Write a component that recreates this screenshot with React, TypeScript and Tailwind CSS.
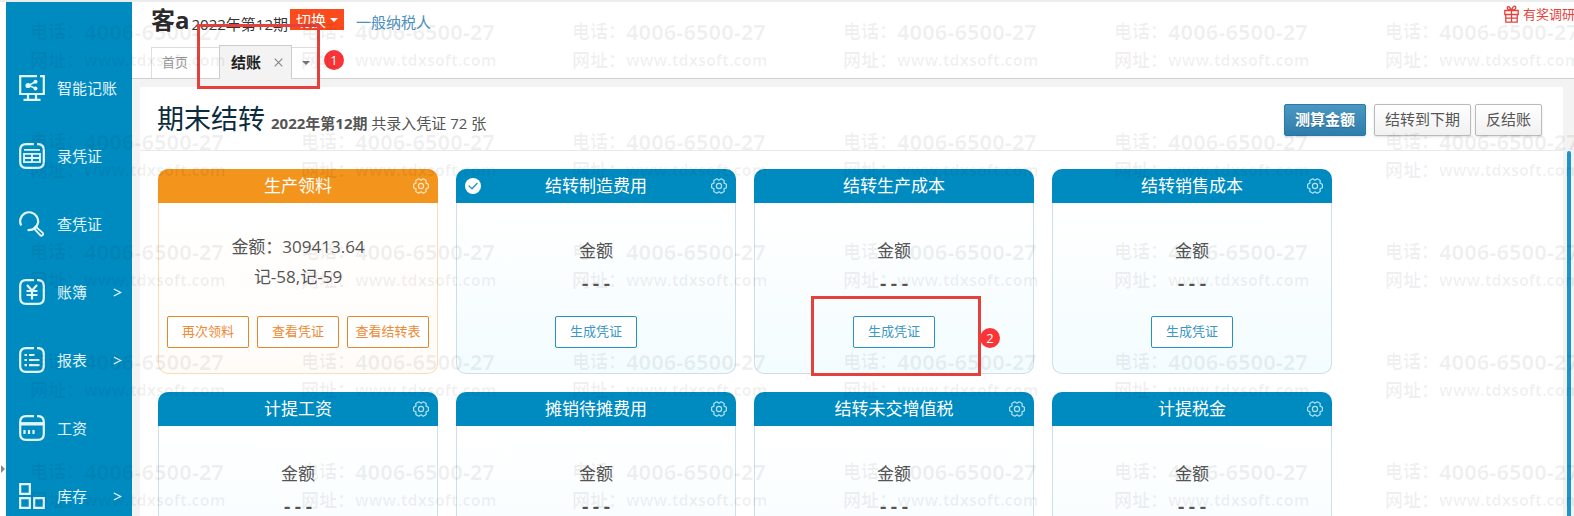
import type { ReactNode } from 'react';

type Card = {
  title: string;
  lines?: string[];
  actions: string[];
  done?: boolean;
  settings?: boolean;
  warm?: boolean;
  marked?: boolean;
};

const cards: Card[] = [
  {
    title: '生产领料',
    lines: ['金额：309413.64', '记-58,记-59'],
    actions: ['再次领料', '查看凭证', '查看结转表'],
    settings: true,
    warm: true,
  },
  { title: '结转制造费用', actions: ['生成凭证'], done: true, settings: true },
  { title: '结转生产成本', actions: ['生成凭证'], marked: true },
  { title: '结转销售成本', actions: ['生成凭证'], settings: true },
  { title: '计提工资', actions: ['生成凭证'], settings: true },
  { title: '摊销待摊费用', actions: ['生成凭证'], settings: true },
  { title: '结转未交增值税', actions: ['生成凭证'], settings: true },
  { title: '计提税金', actions: ['生成凭证'], settings: true },
];

function Icon({ children }: { children: ReactNode }) {
  return (
    <svg
      viewBox="0 0 26 26"
      className="size-[26px] shrink-0"
      fill="none"
      stroke="currentColor"
      strokeWidth="2.2"
      aria-hidden="true"
    >
      {children}
    </svg>
  );
}

// rounded frame with a small break in the top edge
const frame = 'M15 1.2H7Q1.2 1.2 1.2 7V19Q1.2 24.8 7 24.8H19Q24.8 24.8 24.8 19V7Q24.8 1.6 19.5 1.2H18';

const menu = [
  {
    label: '智能记账',
    icon: (
      <Icon>
        <path d="M18 1.2H1.2V19H24.8V1.2H21" />
        <path d="M9 19v5M17 19v5M4.5 24.8h17" />
        <path d="M17 6.5L9.5 10.5L17 13.5" strokeWidth="1.5" />
        <circle cx="16.5" cy="6.8" r="2" fill="currentColor" stroke="none" />
        <circle cx="9" cy="10.5" r="2.6" fill="currentColor" stroke="none" />
        <circle cx="16.5" cy="13.5" r="2" fill="currentColor" stroke="none" />
      </Icon>
    ),
  },
  {
    label: '录凭证',
    icon: (
      <Icon>
        <path d={frame} />
        <path d="M5 6.8h16M5 10.8h16v8.4H5zM5 15h16M13 10.8v8.4" strokeWidth="1.8" />
      </Icon>
    ),
  },
  {
    label: '查凭证',
    icon: (
      <Icon>
        <path d="M2.2 14.5A9 9 0 1 1 15.5 17.5Q13 19.3 8.5 19" />
        <path d="M16.5 15.5l7 6.2q1.4 1.5 0 2.6t-2.6-.4l-6-6.5z" strokeWidth="1.8" />
      </Icon>
    ),
  },
  {
    label: '账簿',
    more: true,
    icon: (
      <Icon>
        <path d={frame} />
        <path d="M8 6l5 5.5L18 6M7.5 12h11M7.5 16h11M13 11.5v9" />
      </Icon>
    ),
  },
  {
    label: '报表',
    more: true,
    icon: (
      <Icon>
        <path d={frame} />
        <path d="M5.5 8h2.5M10 8h5.5M5.5 13h2.5M10 13h10.5M5.5 18.2h2.5M10 18.2h10.5" />
      </Icon>
    ),
  },
  {
    label: '工资',
    icon: (
      <Icon>
        <path d={frame} />
        <path d="M1 8.8h24" strokeWidth="3.4" />
        <path d="M5.5 15v4M10 15v4M14.5 15v4" />
      </Icon>
    ),
  },
  {
    label: '库存',
    more: true,
    icon: (
      <Icon>
        <path d="M1.2 1.2h9.6v9.6H1.2zM1.2 15.2h9.6v9.6H1.2zM15.2 15.2h9.6v9.6h-9.6z" />
      </Icon>
    ),
  },
];

function Gear() {
  return (
    <svg viewBox="0 0 16 16" className="size-4" fill="none" stroke="currentColor" strokeWidth="1.2" aria-hidden="true">
      <path
        d="M15.4 6.3V9.7L13 10.9L13.2 13.5L10.2 15.2L8 13.8L5.8 15.2L2.8 13.5L3 10.9L.6 9.7V6.3L3 5.1L2.8 2.5L5.8 .8L8 2.2L10.2 .8L13.2 2.5L13 5.1Z"
        strokeLinejoin="round"
      />
      <circle cx="8" cy="8" r="2.6" />
    </svg>
  );
}

function Gift() {
  return (
    <svg viewBox="0 0 15 18" className="h-[18px] w-[15px]" fill="none" stroke="currentColor" strokeWidth="1.3" aria-hidden="true">
      <path d="M.8 5.5h13.4v4H.8zM1.8 9.5h11.4v7.7H1.8zM7.5 5.5v11.7M1.8 13.2h11.4" />
      <path d="M7.5 5.3Q2.6 5 3.4 2.2Q4.6 0 7.5 5.3Q9.4-.4 11.6 1.6Q12.6 5 7.5 5.3" />
    </svg>
  );
}

function Caret() {
  return <span className="border-x-4 border-t-4 border-x-transparent" />;
}

function Badge({ n }: { n: number }) {
  return (
    <span className="flex size-5 items-center justify-center rounded-full bg-[#fa3538] text-[13px] leading-5 text-white">
      {n}
    </span>
  );
}

function Sidebar() {
  return (
    <aside className="w-[126px] shrink-0 bg-[#008bc0] pt-[52px] text-[#e4f6fd]">
      <nav>
        {menu.map((item) => (
          <a key={item.label} href="#" className="flex h-[68px] items-center pr-[10px] pl-[13px] text-[15px]">
            {item.icon}
            <span className="ml-3 grow">{item.label}</span>
            {item.more && (
              <svg viewBox="0 0 9 9" className="size-[9px]" fill="none" stroke="currentColor" strokeWidth="1.4" aria-hidden="true">
                <path d="M.8 1L7.6 4.5L.8 8" />
              </svg>
            )}
          </a>
        ))}
      </nav>
    </aside>
  );
}

function TopBar() {
  return (
    <header className="flex h-[77px] shrink-0 flex-col justify-between border-b border-[#cfcfcf] bg-white">
      <div className="flex items-start justify-between">
        <div className="flex items-start pl-[19px]">
          <h1 className="text-2xl leading-9 font-bold text-[#2b2b2b]">客a</h1>
          <span className="mt-2.5 ml-0.5 text-[15px] leading-6 text-[#333]">2022年第12期</span>
          <button className="mt-[7px] ml-0.5 flex h-[21px] items-center gap-1 bg-[#fb4a1c] px-1.5 text-[15px] leading-5 text-white">
            切换
            <Caret />
          </button>
          <a href="#" className="mt-2 ml-3 text-[15px] leading-6 text-[#4c8fbd]">
            一般纳税人
          </a>
        </div>
        <a href="#" className="mt-0.5 -mr-px flex items-center gap-1 text-[13px] leading-5 text-[#e8413c]">
          <Gift />
          有奖调研
        </a>
      </div>
      <div className="-mb-px flex items-end pl-[19px]">
        <button className="h-8 w-[68px] border border-r-0 border-[#ddd] border-b-[#cfcfcf] pr-4 pl-2.5 text-left text-[13px] text-[#999]">
          首页
        </button>
        <div className="relative flex h-[34px] w-[73px] items-center justify-between border border-b-0 border-[#ccc] bg-[#f3f3f3] pr-2 pl-[11px]">
          <button className="text-[15px] font-bold text-[#222]">结账</button>
          <button aria-label="关闭" className="text-[#888]">
            <svg viewBox="0 0 9 9" className="size-[9px]" fill="none" stroke="currentColor" strokeWidth="1.2">
              <path d="M.7.7L8.3 8.3M8.3.7L.7 8.3" />
            </svg>
          </button>
          <div className="pointer-events-none absolute -top-[22px] -left-[23px] z-10 h-[65px] w-[123px] border-[3px] border-[#e6403d]" />
          <div className="absolute top-1 left-[104px] z-10">
            <Badge n={1} />
          </div>
        </div>
        <button aria-label="更多" className="flex h-8 w-7 items-center justify-center border-t border-b border-[#ddd] border-b-[#cfcfcf] text-[#777]">
          <Caret />
        </button>
      </div>
    </header>
  );
}

function CarryCard({ card }: { card: Card }) {
  const warm = card.warm;
  return (
    <section
      className={`relative flex h-[205px] w-[280px] flex-col rounded-[10px] border border-t-0 bg-linear-to-b from-white from-20% ${
        warm ? 'border-[#fbdcb6] to-[#fffcf8]' : 'border-[#cbe0ea] to-[#f3fcff]'
      }`}
    >
      <div
        className={`-mx-px flex h-[34px] shrink-0 items-center justify-between rounded-t-[10px] px-[9px] text-white ${
          warm ? 'bg-[#f3941d]' : 'bg-[#008bc0]'
        }`}
      >
        <span className="w-4">
          {card.done && (
            <svg viewBox="0 0 16 16" className="size-4" fill="none" aria-label="已完成">
              <circle cx="8" cy="8" r="8" fill="white" />
              <path d="M3.6 7.6L7 10.8L12.4 5" stroke="#2b8fc0" strokeWidth="1.3" />
            </svg>
          )}
        </span>
        <h3 className="text-[17px] leading-6">{card.title}</h3>
        <span className="w-4">
          {card.settings && (
            <button aria-label="设置" className={`block ${warm ? 'text-[#fde6c4]' : 'text-[#b5e2f3]'}`}>
              <Gear />
            </button>
          )}
        </span>
      </div>
      <div className="flex h-[113px] flex-col items-center pt-[29px] text-[17px] leading-[30px] text-[#555]">
        {card.lines ? (
          card.lines.map((line) => <p key={line}>{line}</p>)
        ) : (
          <>
            <p className="mt-1">金额</p>
            <p className="mt-1 font-['Liberation_Mono',monospace] text-lg leading-[30px] font-bold">---</p>
          </>
        )}
      </div>
      <div className="flex justify-center gap-2">
        {card.actions.map((action) => (
          <button
            key={action}
            className={`h-8 w-[82px] rounded-xs border bg-white pb-0.5 text-[13px] leading-5 ${
              warm ? 'border-[#e2872c] text-[#ee8a33]' : 'border-[#2492c2] text-[#3a97c6]'
            }`}
          >
            {action}
          </button>
        ))}
      </div>
      {card.marked && (
        <>
          <div className="pointer-events-none absolute top-[127px] left-14 z-10 h-20 w-[170px] border-[3px] border-[#e6403d]" />
          <div className="absolute top-[159px] left-[225px] z-10">
            <Badge n={2} />
          </div>
        </>
      )}
    </section>
  );
}

function Watermark() {
  return (
    <div
      aria-hidden="true"
      className="pointer-events-none absolute inset-0 z-20 grid auto-rows-[110px] grid-cols-[repeat(6,271px)] overflow-hidden pt-[15px] pl-[30px] font-bold text-black/6"
    >
      {Array.from({ length: 30 }, (_, i) => (
        <div key={i} className="grid grid-cols-[54px_auto] content-start justify-start whitespace-nowrap">
          <span className="text-lg leading-[29px]">电话：</span>
          <span className="text-[22px] leading-[29px]">4006-6500-27</span>
          <span className="text-lg leading-[29px]">网址：</span>
          <span className="text-base leading-[29px]">www.tdxsoft.com</span>
        </div>
      ))}
    </div>
  );
}

export default function App() {
  return (
    <div className="relative flex h-screen overflow-hidden border-t-2 border-[#ececec] bg-white pl-1.5 font-['Open_Sans','Noto_Sans_CJK_SC',sans-serif]">
      <button aria-label="展开" className="absolute top-[463px] left-px border-y-4 border-l-4 border-y-transparent border-l-[#888]" />
      <Sidebar />
      <div className="flex min-w-0 grow flex-col bg-[#f3f3f3]">
        <TopBar />
        <main className="mt-2 mr-[11px] ml-2 flex grow flex-col bg-white">
          <div className="flex h-16 shrink-0 items-center justify-between border-b border-[#e9e9e9] pr-[21px] pl-[17px]">
            <h2 className="flex items-baseline pt-1 text-[27px] leading-10 text-[#0b2c3d]">
              期末结转
              <small className="ml-1.5 text-[15px] text-[#555]">
                <b>2022年第12期</b> 共录入凭证 72 张
              </small>
            </h2>
            <div className="flex pt-0.5 text-[15px] text-[#555]">
              <button className="mr-2 h-8 rounded-xs border border-[#2a7ba6] bg-linear-to-b from-[#4a97c2] to-[#2f7dab] px-2.5 font-bold text-white shadow-sm text-shadow-xs">
                测算金额
              </button>
              <button className="mr-1 h-8 rounded-xs border border-[#bbb] bg-linear-to-b from-white to-[#f1f1f1] px-2.5 shadow-sm">
                结转到下期
              </button>
              <button className="h-8 rounded-xs border border-[#bbb] bg-linear-to-b from-white to-[#f1f1f1] px-2.5 shadow-sm">
                反结账
              </button>
            </div>
          </div>
          <div className="flex flex-wrap gap-[18px] pt-[18px] pr-[200px] pl-[18px]">
            {cards.map((card) => (
              <CarryCard key={card.title} card={card} />
            ))}
          </div>
        </main>
      </div>
      <div className="absolute top-[149px] right-[3px] bottom-0 w-1 rounded-t-xs bg-[#1c96c8]" />
      <Watermark />
    </div>
  );
}
